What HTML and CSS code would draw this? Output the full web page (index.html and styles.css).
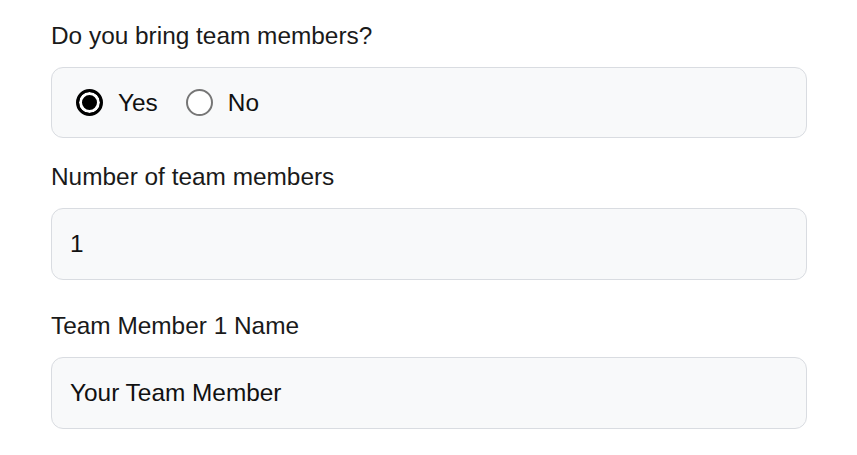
FILE: index.html
```html
<!DOCTYPE html>
<html lang="en">
<head>
<meta charset="utf-8">
<title>Team members</title>
<link rel="stylesheet" href="styles.css">
</head>
<body>
<form class="form">
  <div class="field field-radio">
    <div class="label">Do you bring team members?</div>
    <div class="radio-box">
      <label class="radio-option"><input type="radio" name="team" class="radio" checked><span>Yes</span></label>
      <label class="radio-option"><input type="radio" name="team" class="radio"><span>No</span></label>
    </div>
  </div>
  <div class="field field-count">
    <label class="label" for="count">Number of team members</label>
    <input id="count" class="input" type="text" value="1">
  </div>
  <div class="field">
    <label class="label" for="member1">Team Member 1 Name</label>
    <input id="member1" class="input" type="text" value="Your Team Member">
  </div>
</form>
</body>
</html>
```
FILE: styles.css
```css
html, body {
  margin: 0;
  padding: 0;
  background: #ffffff;
}
body {
  font-family: "Liberation Sans", Arial, sans-serif;
  color: #1a1a1a;
}
.form {
  width: 756px;
  padding: 22px 0 0 51px;
}
.field {
  display: flex;
  flex-direction: column;
}
.field-radio {
  margin-bottom: 25px;
}
.field-count {
  margin-bottom: 32px;
}
.label {
  font-size: 24.4px;
  line-height: 28px;
  margin-bottom: 17px;
  color: #1a1a1a;
}
.radio-box {
  box-sizing: border-box;
  height: 71px;
  border: 1px solid #d9dce1;
  border-radius: 12px;
  background: #f8f9fa;
  display: flex;
  align-items: center;
  padding-left: 24px;
  gap: 28px;
}
.radio-option {
  display: flex;
  align-items: center;
  gap: 15px;
  font-size: 24.4px;
  line-height: 28px;
  color: #111;
}
.radio {
  -webkit-appearance: none;
  appearance: none;
  margin: 0;
  width: 27px;
  height: 27px;
  box-sizing: border-box;
  border-radius: 50%;
  border: 2px solid #767676;
  background: #fff;
}
.radio:checked {
  border: 3px solid #000;
  background: #000;
  box-shadow: inset 0 0 0 3px #fff;
}
.input {
  box-sizing: border-box;
  width: 100%;
  height: 72px;
  margin: 0;
  padding: 0 18px;
  border: 1px solid #d9dce1;
  border-radius: 12px;
  background: #f8f9fa;
  font-family: "Liberation Sans", Arial, sans-serif;
  font-size: 24.4px;
  color: #111;
  outline: none;
}
```
